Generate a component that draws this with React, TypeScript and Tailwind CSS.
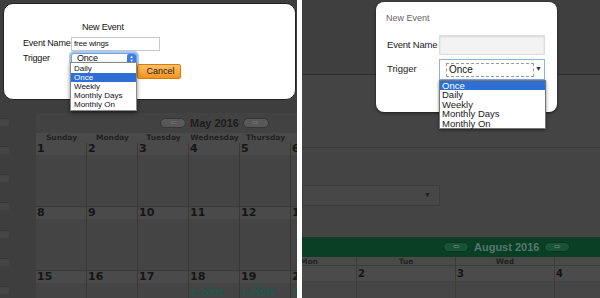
const leftDays = ["Sunday", "Monday", "Tuesday", "Wednesday", "Thursday", "Friday", "Saturday"];
const leftWeeks = [
  [1, 2, 3, 4, 5, 6, 7],
  [8, 9, 10, 11, 12, 13, 14],
  [15, 16, 17, 18, 19, 20, 21],
];
const rightDays = ["Mon", "Tue", "Wed", "Thu"];
const options = ["Daily", "Once", "Weekly", "Monthly Days", "Monthly On"];
const options2 = ["Once", "Daily", "Weekly", "Monthly Days", "Monthly On"];

const NavPill = ({ dir, green }: { dir: "l" | "r"; green?: boolean }) => (
  <div
    className={`w-[26px] h-[10px] rounded-full flex items-center justify-center text-[8px] leading-none ${
      green ? "bg-[#1a5236] border border-[#083420] text-[#6f8f7f]" : "bg-[#585858] border border-[#353535] text-[#777]"
    }`}
  >
    {dir === "l" ? "⇦" : "⇨"}
  </div>
);

const LeftPanel = () => (
  <div className="relative w-[297px] h-full shrink-0 overflow-hidden bg-[#3e3e3e] flex" style={{ fontFamily: "'Liberation Sans', Arial, sans-serif" }}>
    {/* sidebar strip */}
    <div className="w-[9px] shrink-0 pt-[118px] flex flex-col gap-[20px]">
      {Array.from({ length: 9 }).map((_, i) => (
        <div key={i} className="h-[8px] shrink-0 bg-[#444] border-t border-[#363636]" />
      ))}
    </div>
    {/* calendar */}
    <div className="ml-[27px] mt-[113px] w-[357px] shrink-0 bg-[#424242]">
      <div className="h-[20px] flex items-center justify-center gap-[4px]">
        <NavPill dir="l" />
        <span className="text-[11px] font-bold text-[#1c1c1c]">May 2016</span>
        <NavPill dir="r" />
      </div>
      <div className="grid grid-cols-7 h-[10px] bg-[#4a4a4a]">
        {leftDays.map((d) => (
          <div key={d} className="text-center text-[7.5px] font-bold leading-[10px] text-[#222]" style={{ fontFamily: "'DejaVu Sans', sans-serif" }}>
            {d}
          </div>
        ))}
      </div>
      {leftWeeks.map((w, wi) => (
        <div key={wi} className="grid grid-cols-7 h-[64px]">
          {w.map((n) => (
            <div key={n} className="border-r border-b border-[#393939] flex flex-col bg-[#444]">
              <div className="h-[12px] bg-[#4a4a4a] px-[1px] text-[11px] font-bold leading-[12px] text-[#151515]" style={{ fontFamily: "'DejaVu Sans', sans-serif" }}>
                {n}
              </div>
              {n >= 18 && n <= 20 && (
                <span className="mt-[1px] px-[1px] text-[9.5px] font-bold underline text-[#1c5a4c]" style={{ fontFamily: "'DejaVu Serif', serif" }}>
                  + New
                </span>
              )}
            </div>
          ))}
        </div>
      ))}
    </div>

    {/* modal */}
    <div className="absolute left-[3px] top-[3px] w-[293px] h-[97px] bg-white rounded-[10px] border border-[#222] text-[#111]">
      <div className="pt-[18px] pl-[19px] text-[9px] tracking-[-0.2px] flex flex-col">
        <div className="pl-[59px] leading-[11px]">New Event</div>
        <div className="mt-[4px] flex items-center">
          <span className="w-[48px] whitespace-nowrap">Event Name</span>
          <div className="w-[89px] h-[14px] border border-[#c8c8c8] text-[8px] leading-[12px] px-[2px]">free wings</div>
        </div>
        <div className="mt-[1px] flex items-center">
          <span className="w-[48px] whitespace-nowrap">Trigger</span>
          <div className="w-[66px] h-[12px] rounded-[3px] border border-[#6d9fe3] shadow-[0_0_0_2px_#a9c8f3] flex items-center bg-white">
            <span className="flex-1 pl-[5px] text-[9px] leading-none">Once</span>
            <div className="w-[9px] h-[10px] rounded-[2px] bg-[#3d7ee0] flex flex-col items-center justify-center text-white text-[4px] leading-[4px]">
              <span>▲</span>
              <span>▼</span>
            </div>
          </div>
        </div>
      </div>
      <button className="absolute left-[133px] top-[60px] w-[44px] h-[15px] rounded-[2px] border border-[#d47c12] bg-gradient-to-b from-[#ffc060] to-[#f39216] text-[9px] text-[#222] pl-[3px]">
        Cancel
      </button>
    </div>
    {/* dropdown */}
    <div className="absolute left-[70px] top-[62px] w-[67px] bg-white border border-[#8a8a8a] shadow-[0_2px_4px_rgba(0,0,0,0.5)] py-[1px]">
      {options.map((o) => (
        <div
          key={o}
          className={`h-[9px] px-[3px] text-[8px] leading-[9px] whitespace-nowrap ${o === "Once" ? "bg-[#2f6ed4] text-white" : "text-[#111]"}`}
        >
          {o}
        </div>
      ))}
    </div>
  </div>
);

const RightPanel = () => (
  <div className="relative flex-1 h-full overflow-hidden bg-[#424242] flex flex-col" style={{ fontFamily: "'Liberation Sans', Arial, sans-serif" }}>
    <div className="h-[75px] shrink-0 bg-[#3f3f3f] border-b border-[#2e2e2e]" />
    <div className="h-[73px] shrink-0 bg-[#444] border-b border-[#3a3a3a]" />
    <div className="h-[89px] shrink-0 bg-[#444] pt-[37px]">
      <div className="w-[138px] h-[21px] bg-[#474747] border border-[#3c3c3c] flex items-center justify-end pr-[8px] text-[7px] text-[#1e1e1e]">
        ▼
      </div>
    </div>
    <div className="h-[20px] shrink-0 bg-[#0a3f25] flex items-center gap-[5px] pl-[141px]">
      <NavPill dir="l" green />
      <span className="text-[11px] font-bold text-[#55786a]">August 2016</span>
      <NavPill dir="r" green />
    </div>
    <div className="grid grid-cols-[55px_99px_99px_99px_99px] h-[9px] shrink-0 bg-[#4a4a4a] border-b border-[#3c3c3c]">
      {rightDays.map((d, i) => (
        <div
          key={d}
          className={`text-[7.5px] font-bold leading-[9px] text-[#232323] border-r border-[#3c3c3c] whitespace-nowrap ${i === 0 ? "text-left -ml-[2px]" : i === 3 ? "text-right" : "text-center"}`}
          style={{ fontFamily: "'DejaVu Sans', sans-serif" }}
        >
          {d}
        </div>
      ))}
    </div>
    <div className="grid grid-cols-[55px_99px_99px_99px] flex-1">
      {["", "2", "3", "4"].map((n, i) => (
        <div key={i} className="border-r border-[#3c3c3c] flex flex-col">
          <div className="h-[15px] bg-[#4b4b4b] pl-[1px] text-[10px] font-bold leading-[15px] text-[#151515]" style={{ fontFamily: "'DejaVu Sans', sans-serif" }}>
            {n}
          </div>
          <div className="flex-1 bg-[#454545]" />
        </div>
      ))}
    </div>

    {/* modal */}
    <div className="absolute left-[74px] top-[2px] w-[181px] h-[110px] bg-white rounded-[8px] shadow-[0_1px_3px_rgba(0,0,0,0.6)] text-[#222]">
      <div className="pt-[11px] pl-[10px] text-[9px] leading-[10px] text-[#666]">New Event</div>
      <div className="mt-[12px] flex items-center pl-[11px]">
        <span className="w-[52px] text-[9.5px] whitespace-nowrap tracking-[-0.2px]">Event Name</span>
        <div className="w-[106px] h-[20px] bg-[#f3f3f3] border border-[#dedede] shadow-[inset_0_1px_2px_rgba(0,0,0,0.12)]" />
      </div>
      <div className="mt-[4px] flex items-center pl-[11px]">
        <span className="w-[52px] text-[9.5px] whitespace-nowrap">Trigger</span>
        <div className="w-[106px] h-[21px] border border-[#8fb2dc] bg-white flex items-center pl-[6px] pr-[2px]">
          <div className="w-[91px] h-[14px] border border-dashed border-[#9a9a9a] text-[10px] leading-[12px] pl-[2px] text-[#111]">Once</div>
          <span className="ml-[1px] text-[7px] text-[#333]">▼</span>
        </div>
      </div>
    </div>
    {/* dropdown */}
    <div className="absolute left-[137px] top-[80px] w-[107px] bg-white border border-[#777] shadow-[0_1px_3px_rgba(0,0,0,0.5)]">
      {options2.map((o) => (
        <div
          key={o}
          className={`h-[9.4px] px-[2px] text-[9.5px] leading-[9.4px] whitespace-nowrap ${o === "Once" ? "bg-[#2e6fd3] text-white" : "text-[#1a1a1a]"}`}
        >
          {o}
        </div>
      ))}
    </div>
  </div>
);

export default function App() {
  return (
    <div className="w-[600px] h-[298px] bg-white flex gap-[5px] overflow-hidden">
      <LeftPanel />
      <RightPanel />
    </div>
  );
}
